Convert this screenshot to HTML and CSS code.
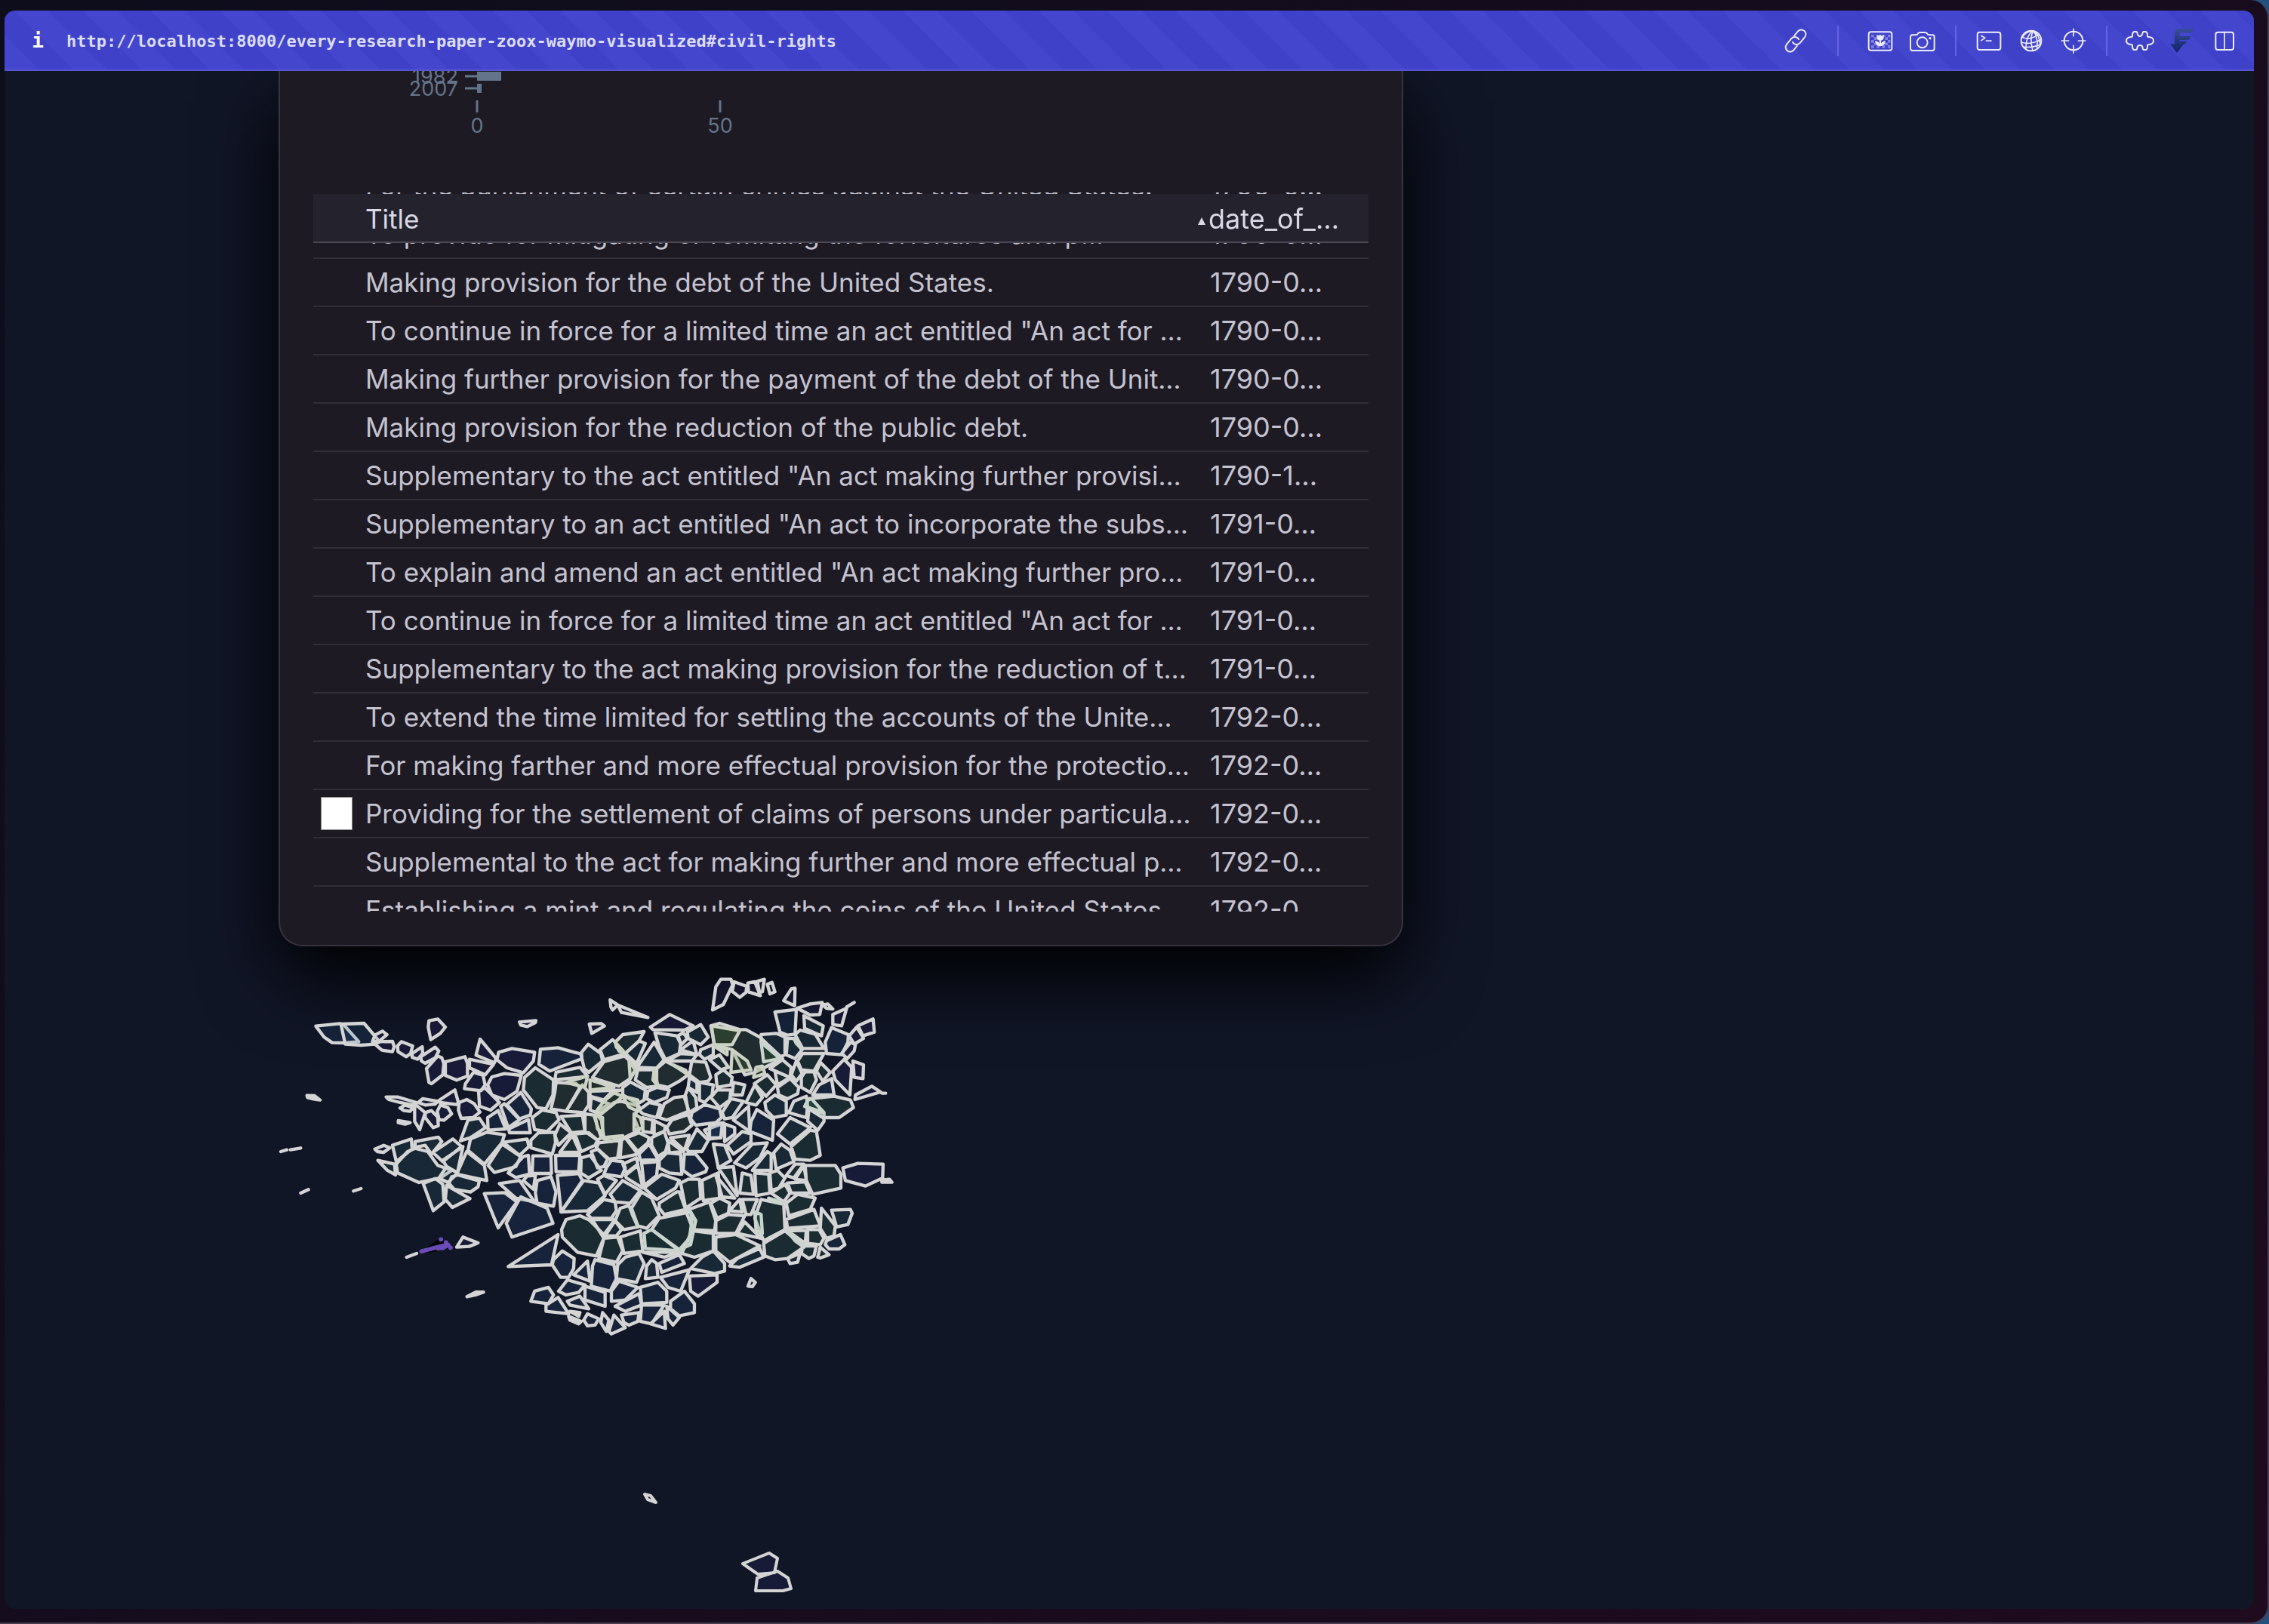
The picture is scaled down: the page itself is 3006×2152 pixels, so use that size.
FILE: index.html
```html
<!DOCTYPE html>
<html lang="en">
<head>
<meta charset="utf-8">
<title>Research map</title>
<link rel="stylesheet" href="styles.css">
</head>
<body>
<div class="window">
<div class="browser">
<header class="bar">
  <button class="info" aria-label="Site information">i</button>
  <a class="url" href="http://localhost:8000/every-research-paper-zoox-waymo-visualized#civil-rights">http://localhost:8000/every-research-paper-zoox-waymo-visualized#civil-rights</a>
  <nav class="tools">
    <button class="tool" aria-label="Copy link"><svg viewBox="0 0 120 120"><g transform="rotate(-51 60 60)"><path d="M48 77H26a18 18 0 0 1 0-36H56a18 18 0 0 1 16 25"/><path d="M72 43H94a18 18 0 0 1 0 36H64a18 18 0 0 1-16-25"/></g></svg></button>
    <span class="sep wide"></span>
    <button class="tool" aria-label="Image"><svg viewBox="0 0 120 120"><path class="soft" d="M24 36h11v10H24zM46 36h11v10H46zM68 36h11v10H68zM90 36h10v10H90zM35 46h11v11H35zM79 46h11v11H79zM24 57h11v11H24zM90 57h10v11H90zM35 68h11v10H35zM79 68h11v10H79zM24 78h11v11H24zM46 78h11v11H46zM68 78h11v11H68zM90 78h10v11H90z"/><rect x="14" y="25" width="92" height="73" rx="9"/><path class="solid" d="M46 36l8 5 6-6 6 6 8-5v10q0 11-11 13v12q4-9 18-10-2 18-19 21h-4q-17-3-19-21 14 1 18 10V59q-11-2-11-13z"/></svg></button>
    <button class="tool" aria-label="Screenshot"><svg viewBox="0 0 120 120"><path d="M20 37H33Q39 37 42 31Q45 27 50 27H70Q75 27 78 31Q81 37 87 37H99Q107 37 107 45V91Q107 99 99 99H20Q12 99 12 91V45Q12 37 20 37Z"/><circle cx="59" cy="67" r="21"/><circle class="solid" cx="90" cy="50" r="5"/></svg></button>
    <span class="sep"></span>
    <button class="tool" aria-label="Console"><svg viewBox="0 0 120 120"><rect x="14" y="26" width="92" height="70" rx="9"/><path class="mid" d="M29 40L44 49L29 59M49 60H69"/></svg></button>
    <button class="tool" aria-label="Network"><svg viewBox="0 0 120 120"><circle cx="60" cy="60" r="40"/><path class="mid" d="M68 20Q38 40 39 94M68 20Q52 50 66 99M68 20Q88 45 83 92M68 20Q95 38 95 78M68 20Q36 24 24 48M22 46Q55 60 90 34M20 66Q58 78 100 55M30 85Q66 88 97 74"/></svg></button>
    <button class="tool" aria-label="Inspect"><svg viewBox="0 0 120 120"><circle cx="60" cy="60" r="37"/><path class="mid" d="M60 13V41M60 79V109M13 60H41M79 60H107"/></svg></button>
    <span class="sep"></span>
    <button class="tool" aria-label="Extensions"><svg viewBox="0 0 120 120"><path d="M30 38Q30 24 40 24H45Q49 24 50 32Q52 42 60 42Q68 42 70 32Q71 24 75 24H80Q90 24 90 38V41Q90 45 97 45Q114 47 114 60Q114 73 97 75Q90 75 90 79V83Q90 96 80 96H76Q71 96 71 88Q70 78 60 78Q50 78 49 88Q49 96 44 96H40Q30 96 30 83V79Q30 75 23 75Q6 73 6 60Q6 47 23 45Q30 45 30 41Z"/></svg></button>
    <button class="tool" aria-label="Fonts"><svg viewBox="0 0 120 120"><defs><linearGradient id="ink" x1="0" y1="0" x2="0" y2="1"><stop offset="0" stop-color="#3a4d99"/><stop offset="1" stop-color="#10226b"/></linearGradient></defs><path fill="url(#ink)" stroke="none" d="M30 32Q30 12 50 12H107L99 28H53Q50 28 50 31V42H94L87 57H50V62H79L73 73H67L39 108L12 73H29Z"/></svg></button>
    <button class="tool" aria-label="Split view"><svg viewBox="0 0 120 120"><rect x="25" y="26" width="71" height="70" rx="9"/><path class="mid" d="M60 26V96"/></svg></button>
  </nav>
</header>
<main class="stage">
  <section class="card">
    <svg class="chart">
      <g text-anchor="end"><text x="192" y="17">1982</text><text x="192" y="33">2007</text></g>
      <path d="M201 7H217M201 23H217M217 39V55M539 39V55"/>
      <rect x="217" y="1" width="32" height="12"/><rect x="217" y="17" width="6" height="12"/>
      <g text-anchor="middle"><text x="217" y="82">0</text><text x="539" y="82">50</text></g>
    </svg>
    <div class="scroller">
      <table>
        <thead><tr><th class="pick"></th><th>Title</th><th class="date"><span class="arrow"></span>date_of_…</th></tr></thead>
        <tbody>
          <tr><td></td><td>For the punishment of certain crimes against the United States.</td><td class="date">1790-0…</td></tr>
          <tr><td></td><td>To provide for mitigating or remitting the forfeitures and p…</td><td class="date">1790-0…</td></tr>
          <tr><td></td><td>Making provision for the debt of the United States.</td><td class="date">1790-0…</td></tr>
          <tr><td></td><td>To continue in force for a limited time an act entitled "An act for …</td><td class="date">1790-0…</td></tr>
          <tr><td></td><td>Making further provision for the payment of the debt of the Unit…</td><td class="date">1790-0…</td></tr>
          <tr><td></td><td>Making provision for the reduction of the public debt.</td><td class="date">1790-0…</td></tr>
          <tr><td></td><td>Supplementary to the act entitled "An act making further provisi…</td><td class="date">1790-1…</td></tr>
          <tr><td></td><td>Supplementary to an act entitled "An act to incorporate the subs…</td><td class="date">1791-0…</td></tr>
          <tr><td></td><td>To explain and amend an act entitled "An act making further pro…</td><td class="date">1791-0…</td></tr>
          <tr><td></td><td>To continue in force for a limited time an act entitled "An act for …</td><td class="date">1791-0…</td></tr>
          <tr><td></td><td>Supplementary to the act making provision for the reduction of t…</td><td class="date">1791-0…</td></tr>
          <tr><td></td><td>To extend the time limited for settling the accounts of the Unite…</td><td class="date">1792-0…</td></tr>
          <tr><td></td><td>For making farther and more effectual provision for the protectio…</td><td class="date">1792-0…</td></tr>
          <tr><td class="pick"><input type="checkbox" aria-label="Select row"></td><td>Providing for the settlement of claims of persons under particula…</td><td class="date">1792-0…</td></tr>
          <tr><td></td><td>Supplemental to the act for making further and more effectual p…</td><td class="date">1792-0…</td></tr>
          <tr><td></td><td>Establishing a mint and regulating the coins of the United States.</td><td class="date">1792-0…</td></tr>
        </tbody>
      </table>
    </div>
  </section>
  <svg class="map">
    <!-- west side -->
    <g transform="translate(344 1187) scale(.3333)">
      <path class="b" d="M205 236L300 226L315 230L376 298L320 303L270 302L238 280Z"/>
      <path class="b" d="M305 228L397 225L452 290L440 308L385 312L322 308Z"/>
      <path class="n" d="M440 272L470 256L488 270L460 294L430 300ZM440 308L460 298L510 297L517 318L510 338L468 332ZM545 298L590 315L582 345L565 358L532 338L530 315ZM588 345L628 318L630 345L610 368L588 360ZM622 358L680 320L694 335L680 362L640 384L625 375ZM645 405L690 355L706 362L714 385L710 430L665 465L655 460ZM720 378L798 358L808 385L808 435L765 451L720 432ZM858 288L922 365L915 382L842 352ZM816 368L912 388L878 430L816 402ZM932 340L985 325L1075 340L1070 375L1030 422L965 402L925 370ZM832 420L870 432L878 470L862 493L796 485L800 465ZM905 438L955 425L1022 432L1005 495L955 528L905 510L888 470ZM878 482L935 540L900 570L856 555L852 495ZM775 540L805 528L835 545L858 578L830 600L783 603L772 570ZM690 535L758 490L772 540L765 548L700 540ZM485 518L530 518L605 540L590 550L540 540L495 528ZM612 540L630 525L690 535L680 546L640 550ZM540 562L560 550L592 560L580 575L555 572ZM598 545L640 580L618 648L598 615ZM640 580L665 572L690 598L692 632L672 640L640 600ZM700 550L730 560L745 585L715 610L695 608L688 575ZM655 215L690 208L720 240L700 265L662 290L652 240ZM1015 220L1080 214L1078 222L1046 238L1020 232ZM440 725L475 710L500 720L475 738L450 735ZM765 1115L790 1075L850 1098L815 1112Z"/>
      <path class="s" d="M533 612L580 620L560 626L533 620ZM170 512L200 513L222 530L200 527L172 520ZM66 735L90 728ZM104 728L145 721ZM145 900L176 886ZM355 892L385 882ZM566 1155L606 1140ZM806 1312L840 1294L872 1294L840 1305Z"/>
      <path class="b" d="M1098 328L1168 322L1262 348L1262 366L1135 415L1092 388ZM888 600L930 572L960 645L890 650ZM940 555L955 545L1015 608L970 640ZM965 548L1020 500L1062 565L1058 590L1015 605ZM972 645L1050 608L1058 660L975 660ZM1030 755L1050 750L1055 825L1000 838L970 820ZM1068 752L1140 752L1142 822L1065 822ZM1030 850L1045 832L1078 830L1070 885ZM1085 850L1140 835L1160 895L1150 952L1085 940L1078 900ZM935 862L1015 850L1075 935L1000 920ZM875 902L955 898L1005 935L930 1038ZM1168 1065L1142 1185L970 1192ZM1150 1165L1185 1130L1232 1160L1230 1200L1210 1235L1178 1235L1145 1185ZM1075 1290L1130 1275L1150 1305L1130 1340L1060 1330Z"/>
      <path class="b" d="M1000 950L1020 915L1125 960L1148 1020L985 1075L962 1020Z"/>
      <path class="t" d="M510 710L585 685L588 725L525 775ZM600 695L692 678L706 695L665 745L640 710L600 718ZM670 738L750 685L785 715L710 775ZM452 770L518 785L522 828L490 810ZM710 770L790 715L768 820L725 795ZM805 735L875 790L885 850L765 825ZM745 835L770 828L855 852L850 875L820 896L755 885L735 862ZM632 862L680 842L710 865L715 935L672 970ZM725 870L818 922L748 957L720 925ZM780 692L810 610L855 602L880 640L820 680ZM820 685L885 658L955 668L945 700L875 785L810 730ZM950 698L1045 685L1052 715L1015 750Z"/>
      <path class="t" d="M525 785L570 735L600 722L650 735L690 790L745 810L700 840L615 858L530 820ZM945 705L1020 755L1000 795L915 818L890 790Z"/>
      <path class="t" d="M695 840L725 795L770 820L730 858Z"/>
      <path class="g" d="M1035 440L1078 402L1150 450L1148 510L1120 565L1085 560L1030 490ZM1065 600L1105 570L1160 580L1172 608L1125 655L1075 648ZM1060 690L1090 660L1155 658L1158 700L1145 745L1060 720Z"/>
      <path class="cluster" d="M622 1135L700 1080L745 1118L660 1135Z"/>
      <path class="picked" d="M625 1132L655 1124L680 1117L700 1112L728 1105M690 1120L712 1118L732 1106M702 1084h1M740 1117h1M722 1096h1"/>
    </g>
    <!-- centre -->
    <g transform="translate(694 1187) scale(.3333)">
      <path class="n" d="M485 240L562 190L655 235L620 252L495 250ZM325 132L355 152L335 172L328 160ZM355 152L475 202L370 182ZM242 228L290 226L302 236L252 265ZM640 1230L750 1225L750 1255L675 1310L645 1290Z"/>
      <path class="t" d="M208 345L238 308L288 345L295 375L240 420L222 405ZM285 330L335 290L385 345L300 370ZM385 345L440 295L465 305L430 385ZM432 400L500 300L540 370L510 403ZM503 262L590 275L605 305L600 345L545 370L520 320ZM595 275L615 262L632 285L608 310ZM632 260L685 230L715 280L685 310L635 285ZM605 330L655 295L670 350ZM605 345L670 350L650 375L550 375ZM685 330L735 310L735 350L700 368L680 350ZM375 480L405 458L465 490L460 530L435 545L375 510ZM475 495L510 480L560 490L550 520L500 540L470 525ZM440 570L480 540L525 550L510 600L455 585ZM640 440L670 460L670 500L635 480ZM680 460L735 470L730 510L700 540L680 530ZM245 495L370 490L330 500L300 530L245 515ZM250 520L320 545L270 580L245 570Z"/>
      <path class="g" d="M345 300L375 270L460 258L440 295L385 345L350 320ZM110 420L205 400L235 435L200 440L105 450ZM435 410L505 410L510 475L470 480L425 450ZM130 595L215 590L225 655L170 660ZM125 625L170 660L120 710L105 670ZM125 738L175 670L205 738ZM185 665L240 660L275 690L265 710L210 735ZM390 680L440 660L480 680L475 700L435 735ZM490 680L540 655L555 700L545 735L515 755L490 710ZM375 785L430 760L435 785L390 820ZM385 830L435 790L455 880L390 840ZM635 480L665 520L670 560L640 580L620 520Z"/>
      <path class="o" d="M300 378L382 355L432 400L405 445L360 475L280 450L255 440ZM545 375L620 415L635 430L600 455L555 480L510 470L510 405ZM540 545L580 520L625 515L635 575L550 610L520 600ZM110 460L190 465L205 480L150 575L90 565L105 500ZM150 575L215 470L240 500L240 550L220 580ZM270 585L340 540L370 535L440 555L420 600L440 650L380 680L300 680L290 610ZM280 700L365 690L355 760L320 765L270 720ZM370 690L385 680L435 745L365 760ZM455 600L495 610L490 660L455 655ZM500 612L545 635L540 655L500 670ZM550 640L570 610L635 588L650 630L620 655L560 665ZM565 680L640 670L620 730ZM555 690L615 735L560 740ZM650 375L705 380L725 440L715 455L680 460L640 430ZM225 585L260 590L290 680L275 690L225 655Z"/>
      <path class="b" d="M650 580L700 548L760 565L768 600L745 620L665 630L645 605ZM700 650L770 625L765 680L720 680ZM440 745L480 705L515 765L445 770ZM310 800L330 770L375 775L385 800L370 835L300 825ZM108 750L205 750L200 815L110 815ZM115 830L200 822L215 850L130 975ZM450 780L515 775L510 830L460 870ZM620 745L665 745L710 800L705 815L650 835L615 810ZM180 1225L235 1170L245 1250ZM255 1190L265 1165L340 1185L350 1240L325 1290L250 1270ZM520 1180L600 1145L620 1180L530 1215ZM525 1235L640 1205L605 1290L555 1275ZM120 1290L155 1245L225 1265L200 1295L150 1305ZM225 1270L305 1295L305 1350L225 1325ZM330 1290L360 1250L435 1275L385 1325L330 1330ZM345 1350L440 1300L450 1345L385 1370ZM445 1275L515 1255L550 1290L550 1335L450 1340ZM155 1330L205 1310L240 1360L165 1345ZM70 1345L118 1315L160 1380L70 1370ZM450 1345L540 1345L490 1420L445 1410ZM485 1420L540 1370L545 1438ZM565 1330L620 1290L660 1340L660 1375L600 1388L565 1360ZM550 1350L600 1395L575 1425L555 1400ZM370 1385L440 1375L435 1410L400 1425L380 1415ZM340 1385L385 1435L330 1460L320 1450ZM295 1375L320 1405L310 1450L288 1415ZM220 1405L235 1380L280 1400L265 1425L235 1428ZM165 1370L205 1375L200 1390ZM160 1390L210 1410L200 1420L165 1405Z"/>
      <path class="t" d="M630 720L670 645L715 690L690 735L635 735ZM250 735L275 725L315 765L300 795L275 800ZM210 760L245 750L290 810L240 840L208 820ZM130 975L220 850L280 860L305 910L235 970ZM275 845L300 830L350 850L305 905ZM520 800L520 770L550 740L605 745L610 825L560 820ZM325 905L375 850L445 890L405 940L345 935ZM460 880L530 825L600 850L585 880L510 925ZM235 985L300 925L345 935L350 970L330 1000L250 1000ZM240 1005L345 1005L300 1065ZM305 1070L345 1010L370 1045L350 1070ZM355 1185L385 1155L440 1140L460 1180L430 1255L350 1240ZM470 1190L490 1165L510 1180L515 1235L465 1240ZM645 1200L690 1155L735 1130L780 1180L780 1210L740 1220Z"/>
      <path class="g" d="M410 960L450 895L490 920L520 990L470 1040L435 1030ZM345 1010L365 960L400 950L435 1035L380 1045ZM520 940L590 895L600 895L625 965L540 985L520 960ZM605 860L635 845L680 845L685 920L625 960ZM690 850L755 820L760 920L695 930ZM132 1045L150 1005L205 990L260 1015L300 1080L270 1150L195 1135L135 1075ZM300 1080L355 1075L375 1130L350 1175L280 1160ZM365 1075L445 1050L455 1130L380 1140ZM490 1045L520 1000L645 975L665 1010L640 1100L600 1125ZM625 970L720 935L745 1010L740 1050L655 1045ZM650 1050L735 1060L735 1130L660 1155L610 1140ZM455 1135L600 1135L540 1155Z"/>
      <path class="h" d="M270 575L300 535L340 502L375 515L340 545L290 585ZM375 515L435 530L435 575L400 558ZM420 585L445 600L455 640L420 650ZM265 590L295 600L295 660L275 645ZM290 680L375 672L330 695ZM150 460L235 435L225 480ZM245 450L340 480L245 490ZM345 300L385 345L360 335ZM405 445L425 410L400 375ZM500 410L495 450L515 475ZM575 390L635 430L625 412Z"/>
      <path class="hg" d="M460 1060L490 1045L600 1130L540 1125L465 1120ZM645 975L665 1010L645 1105L600 1125L640 1080L650 1010ZM405 960L435 1030L415 990Z"/>
    </g>
    <!-- east side -->
    <g transform="translate(934 1187) scale(.3333)">
      <path class="n" d="M45 50L85 50L92 72L55 150L12 172L25 80ZM98 60L148 78L145 102L120 122L90 98ZM152 65L180 60L202 115L155 100ZM190 58L218 50L210 100L198 100ZM230 70L248 62L260 100L240 108ZM340 85L338 155L295 135L325 88ZM348 165L400 148L448 142L438 190L400 192ZM450 152L470 148L490 168L465 165ZM545 165L525 235L490 230L490 190ZM545 160L575 142ZM555 275L585 240L612 285L575 308ZM590 235L650 208L655 260L610 275ZM562 300L580 310L575 335L548 365L525 345ZM535 368L565 400L558 510L500 450L490 415ZM570 375L612 390L610 445L575 440ZM578 528L580 510L645 475L680 498ZM685 503L700 503ZM530 800L590 782L690 785L688 840L620 872L540 850ZM685 848L715 845L725 857L685 857ZM165 1240L182 1255L170 1272L153 1270Z"/>
      <path class="b" d="M260 180L345 170L340 268L310 272L280 260ZM485 242L552 270L550 300L525 350L465 345L460 300ZM410 510L435 470L485 445L495 510ZM165 615L188 568L255 610L250 690L160 655ZM0 630L55 620L45 680L0 685ZM60 625L100 640L100 665L60 695ZM465 1090L520 1065L538 1105L515 1122L475 1122L460 1105Z"/>
      <path class="t" d="M375 195L452 235L445 275L378 245ZM205 270L265 265L300 280L300 350L275 360L205 300ZM310 285L335 285L368 330L340 365L305 350ZM340 270L360 252L420 268L455 325L370 325ZM220 540L260 510L305 535L305 590L255 600L225 570ZM315 580L335 535L385 515L390 550L385 600ZM395 565L455 585L455 615L430 650L390 615ZM270 665L320 600L400 640L320 705ZM255 740L285 705L320 730L335 775L265 805ZM70 710L130 655L165 665L165 695L95 745ZM50 580L85 525L135 535L90 600L60 605ZM95 610L155 555L160 655ZM100 780L170 705L230 700L200 760L145 800ZM170 810L230 735L245 745L245 810ZM15 705L60 710L85 770L35 800ZM485 968L560 965L567 980L550 1025L505 1035ZM310 1160L360 1140L350 1175L320 1180ZM80 1190L110 1160L200 1120L215 1155L120 1195Z"/>
      <path class="o" d="M5 235L40 225L120 250L145 250L200 280L290 365L180 420L140 430L90 330L20 310Z"/>
      <path class="g" d="M350 375L370 345L455 345L415 415L365 410ZM440 380L480 420L450 455L425 415ZM325 430L345 375L368 425L345 455ZM395 525L495 515L560 530L572 560L515 600L450 600L378 555ZM365 440L380 418L415 418L425 450L400 500L365 480ZM270 480L320 445L355 480L350 505L310 525L275 510ZM178 465L230 430L265 470L225 515ZM240 405L290 370L325 400L320 440ZM260 415L320 440L270 470ZM145 540L180 470L210 520L185 550ZM325 715L400 650L425 655L440 750L400 770L340 765ZM35 800L95 795L110 910ZM25 830L100 920L50 915ZM130 820L165 830L175 905L120 900ZM180 820L235 825L240 900L185 910ZM240 820L270 810L300 840L275 880L245 890ZM245 900L300 865L320 900L295 935ZM305 830L340 785L375 785L335 840ZM380 790L500 790L522 825L522 880L410 905L385 850ZM340 845L375 790L385 850ZM310 860L380 855L400 900L325 900ZM305 940L350 905L420 920L400 965L315 990ZM205 925L295 945L300 1045L215 1090L180 1000ZM305 1005L415 965L440 1030L310 1040ZM445 960L500 1030L495 1070L465 1080L440 1040ZM390 1045L435 1045L455 1080L440 1105L390 1100ZM215 1100L300 1050L375 1115L310 1160L260 1165L220 1150ZM310 1050L385 1048L380 1100ZM370 1110L425 1110L415 1150L395 1160L365 1140ZM430 1155L440 1115L475 1145L440 1158ZM5 940L40 920L80 940L75 980L30 1000ZM80 970L120 925L130 975ZM130 925L190 925L165 985L145 985ZM25 1010L75 985L140 990L105 1060L25 1060ZM110 1060L140 1015L205 1080ZM25 1075L105 1065L200 1110L80 1175L25 1130ZM5 520L30 490L85 490L80 530L40 560ZM25 430L55 410L90 440L85 470L30 480ZM95 460L140 470L130 510L90 510ZM0 370L40 350L75 400L45 410Z"/>
      <path class="h" d="M8 235L120 255L90 310L18 310ZM90 330L150 375L165 410L85 420ZM175 440L185 400L210 395L220 425ZM25 320L70 330L70 350Z"/>
      <path class="hg" d="M205 300L280 365L215 378ZM180 975L205 985L210 1060L185 1050ZM335 285L368 330L345 305ZM390 530L405 525L455 580L380 555ZM235 920L295 940L265 938ZM310 1050L375 1115L340 1090Z"/>
    </g>
    <g class="px">
      <path class="n" d="M848 1886L856 1888L863 1897L852 1893Z"/>
      <path class="n" d="M978 1978L1013 1964L1024 1971L1020 1990L998 1992ZM1024 1988L1038 1997L1042 2011L1031 2014L995 2014L997 1997Z"/>
    </g>
  </svg>
</main>
</div>
</div>
</body>
</html>
```
FILE: styles.css
```css
* { box-sizing: border-box; }
body { margin: 0; background: #24507f; font-family: Inter, "Liberation Sans", sans-serif; }
button { background: none; border: 0; padding: 0; color: inherit; font: inherit; }

.window {
  min-height: 100vh;
  display: flex;
  padding: 14px 18px 18px 6px;
  background: linear-gradient(135deg, #0d0d1c, #1f0b1e);
  border: solid #473d50;
  border-width: 0 2px 2px 0;
  border-radius: 0 24px 24px 0;
}
.browser {
  flex: 1;
  display: flex;
  flex-direction: column;
  overflow: hidden;
  border-radius: 14px;
  background: #111627;
}

.bar {
  height: 80px;
  display: flex;
  align-items: center;
  padding: 2px 11px 0 34px;
  color: #ececff;
  border-bottom: 2px solid #5855d0;
  background: repeating-linear-gradient(45deg, #4447cd 0 32px, #3f42c9 32px 64px);
}
.info { width: 20px; margin-right: 28px; font: bold 26px "DejaVu Sans Mono", monospace; color: #fff; }
.url { flex: 1; font: bold 22px "DejaVu Sans Mono", monospace; color: #dcdcfb; text-decoration: none; }
.tools { display: flex; align-items: center; }
.tool { width: 56px; height: 40px; display: grid; place-items: center; }
.tool svg { width: 40px; height: 40px; fill: none; stroke: #ececff; stroke-width: 6; stroke-linecap: round; stroke-linejoin: round; }
.tool .solid { fill: #ececff; stroke: none; }
.tool .soft { fill: #8183e2; stroke: none; }
.tool .mid { stroke-width: 5; }
.sep { width: 2px; height: 40px; margin: 0 15px; background: #6464e4; }
.sep.wide { margin: 0 27px; }

.stage { flex: 1; position: relative; overflow: hidden; }
.card {
  width: 50%;
  margin-left: 363px;
  padding: 0 44px 44px;
  background: #1d1a24;
  border: solid #37343e;
  border-width: 0 2px 2px;
  border-radius: 0 0 32px 32px;
  box-shadow: 0 40px 100px #000;
}
.chart { display: block; width: 100%; height: 161px; fill: #64748b; font-size: 27px; }
.chart path { stroke: #64748b; stroke-width: 3; }

.scroller { height: 953px; overflow: hidden; }
table { width: 100%; margin-top: -105px; table-layout: fixed; border-collapse: separate; border-spacing: 0; color: #c5c3d0; font-size: 35px; line-height: 40px; }
th, td { height: 64px; padding: 0; text-align: left; font-weight: 400; white-space: nowrap; border-bottom: 2px solid #312e38; }
th { position: sticky; top: 2px; z-index: 1; height: 65px; padding-top: 3px; background: #24232d; color: #dad8e4; border-bottom-color: #4a4853; }
.pick { width: 69px; }
.date { width: 210px; font-size: 36px; }
.arrow { display: inline-block; margin: 0 4px 0 -16px; border: solid transparent; border-width: 0 5px 10px; border-bottom-color: #dad8e4; vertical-align: 5px; }
td.pick input { appearance: none; display: block; width: 42px; height: 44px; margin: 0 0 0 10px; background: #fff; border: 1px solid #8b8b8b; }

.map { position: absolute; inset: 0; width: 100%; height: 100%; pointer-events: none; stroke: #d4d4d4; stroke-width: 13; stroke-linejoin: round; stroke-linecap: round; }
.px { stroke-width: 4; }
.n { fill: rgba(84, 64, 181, .12); }
.b { fill: rgba(57, 115, 172, .15); }
.t { fill: rgba(77, 149, 139, .15); }
.g { fill: rgba(90, 169, 112, .15); }
.o { fill: rgba(124, 175, 99, .15); }
.h { fill: rgba(100, 140, 60, .2); stroke: #ccd2c4; }
.hg { fill: rgba(60, 150, 90, .18); stroke: #c8d4cc; }
.s { fill: #d4d4d4; }
.cluster { fill: #000; stroke: #000; stroke-width: 2; }
.picked { fill: none; stroke: #6a4bb8; stroke-width: 17; }
```
